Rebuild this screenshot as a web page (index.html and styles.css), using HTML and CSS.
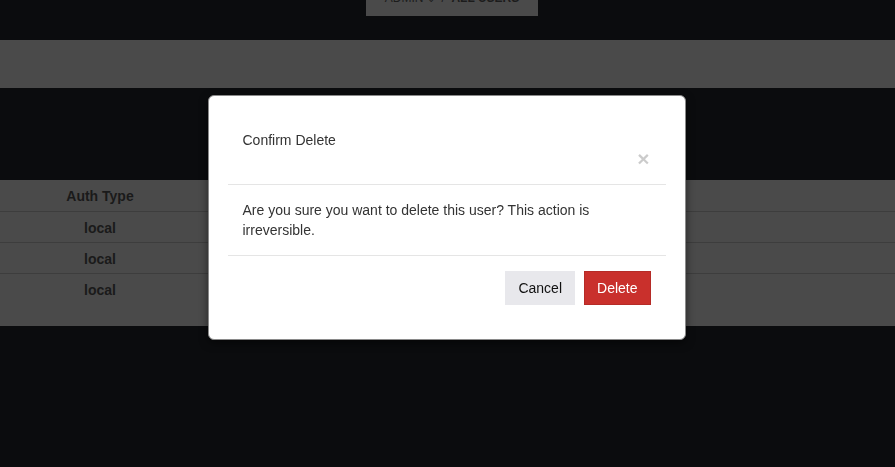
FILE: index.html
```html
<!DOCTYPE html>
<html lang="en">
<head>
<meta charset="utf-8">
<title>All Users</title>
<link rel="stylesheet" href="styles.css">
</head>
<body>
<div class="page">
  <div class="crumb-wrap">
    <div class="crumb">
      <span class="crumb-text">ADMIN <span class="caret">&#8964;</span> &nbsp;/&nbsp; <b>ALL USERS</b></span>
    </div>
  </div>
  <div class="band"></div>
  <div class="table">
    <div class="row head"><div class="cell">Auth Type</div><div class="cell"></div></div>
    <div class="row"><div class="cell">local</div><div class="cell"></div></div>
    <div class="row"><div class="cell">local</div><div class="cell"></div></div>
    <div class="row last"><div class="cell">local</div><div class="cell"></div></div>
  </div>
</div>

<div class="overlay">
  <div class="modal">
    <div class="modal-header">
      <div class="modal-title">Confirm Delete</div>
      <div class="close-line"><span class="close">&times;</span></div>
    </div>
    <div class="modal-body">Are you sure you want to delete this user? This action is irreversible.</div>
    <div class="modal-footer">
      <button class="btn btn-cancel">Cancel</button>
      <button class="btn btn-delete">Delete</button>
    </div>
  </div>
</div>
</body>
</html>
```
FILE: styles.css
```css
html, body {
  margin: 0;
  padding: 0;
  background: #0b0c0e;
  font-family: "Liberation Sans", Arial, sans-serif;
  font-size: 14px;
  color: #333;
}
* { box-sizing: border-box; }
.page {
  width: 895px;
  height: 467px;
  overflow: hidden;
}
.crumb-wrap {
  display: flex;
  justify-content: center;
  padding-left: 9px;
}
.crumb {
  width: 172px;
  height: 16px;
  background: #4a4a4a;
  overflow: hidden;
  display: flex;
  justify-content: center;
}
.crumb-text {
  display: block;
  margin-top: -9px;
  line-height: 14px;
  font-size: 12px;
  color: #1c1c1c;
  white-space: nowrap;
}
.caret { font-size: 10px; }
.band {
  margin-top: 24px;
  height: 48px;
  background: #4a4a4a;
}
.table {
  margin-top: 92px;
  background: #4a4a4a;
  padding-bottom: 21px;
}
.row {
  display: grid;
  grid-template-columns: 200px 1fr;
  height: 31px;
  border-bottom: 1px solid #3d3d3d;
  font-weight: bold;
  color: #1a1a1a;
}
.row.head { height: 32px; }
.row.last { border-bottom: none; }
.cell {
  display: flex;
  align-items: center;
  justify-content: center;
  font-size: 14px;
  padding-top: 1px;
}
.row.head .cell { padding-top: 0; }

.overlay {
  position: fixed;
  inset: 0;
  display: flex;
  justify-content: center;
  align-items: flex-start;
  padding-top: 95px;
  padding-right: 2px;
}
.modal {
  width: 478px;
  background: #fff;
  border: 1px solid #8a8a8a;
  border-radius: 6px;
  box-shadow: 0 3px 9px rgba(0,0,0,0.5);
  padding: 19px 19px 19px;
}
.modal-header {
  padding: 15px 15px 14px;
  border-bottom: 1px solid #e5e5e5;
}
.modal-title {
  line-height: 20px;
  color: #333;
}
.close-line {
  display: flex;
  justify-content: flex-end;
  height: 20px;
}
.close {
  font-size: 21px;
  font-weight: bold;
  line-height: 17px;
  color: #000;
  opacity: 0.2;
  margin-right: 1px;
}
.modal-body {
  padding: 15px;
  line-height: 20px;
  color: #333;
  border-bottom: 1px solid #e5e5e5;
}
.modal-footer {
  padding: 15px 15px 15px;
  display: flex;
  justify-content: flex-end;
  gap: 9px;
}
.btn {
  height: 34px;
  padding: 0 12px;
  font-family: "Liberation Sans", Arial, sans-serif;
  font-size: 14px;
  border: 1px solid transparent;
  border-radius: 0;
}
.btn-cancel {
  background: #e8e8ec;
  border-color: #e8e8ec;
  color: #111;
}
.btn-delete {
  background: #c9302c;
  border-color: #b52b27;
  color: #fff;
}
```
